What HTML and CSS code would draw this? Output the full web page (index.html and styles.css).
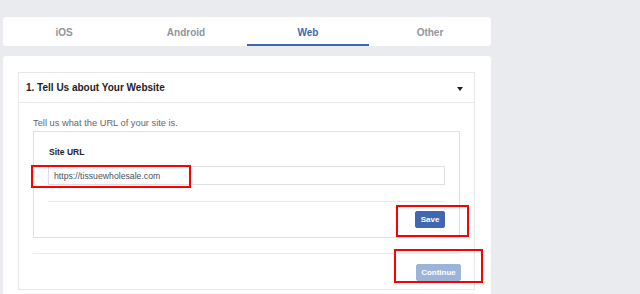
FILE: index.html
```html
<!DOCTYPE html>
<html lang="en">
<head>
    <meta charset="UTF-8">
    <meta name="viewport" content="width=device-width, initial-scale=1.0">
    <title>Quickstart - Web</title>
    <link rel="stylesheet" href="styles.css">
</head>
<body>
    <div class="page">
        <div class="tabs">
            <div class="tab">iOS</div>
            <div class="tab">Android</div>
            <div class="tab active">Web</div>
            <div class="tab">Other</div>
        </div>

        <div class="card">
            <div class="section">
                <div class="section-header">
                    <span>1. Tell Us about Your Website</span>
                    <span class="caret"></span>
                </div>
                <div class="section-body">
                    <p class="hint">Tell us what the URL of your site is.</p>
                    <div class="form-box">
                        <label class="field-label" for="siteUrl">Site URL</label>
                        <input type="text" id="siteUrl" class="field-input" value="https://tissuewholesale.com">
                        <div class="form-footer">
                            <button class="btn">Save</button>
                        </div>
                    </div>
                    <div class="section-footer">
                        <button class="btn disabled">Continue</button>
                    </div>
                </div>
            </div>
        </div>

        <!-- annotations -->
        <div class="mark mark-url"></div>
        <div class="mark mark-save"></div>
        <div class="mark mark-continue"></div>
    </div>
</body>
</html>
```

FILE: styles.css
```css
body {
    margin: 0;
    background-color: #e9ebee;
    font-family: "Liberation Sans", Arial, sans-serif;
    color: #1d2129;
}
.page {
    position: relative;
    padding: 17px 0 0 3px;
    width: 488px;
    height: 277px;
    overflow: hidden;
}
.tabs {
    display: flex;
    background-color: #fff;
    border-radius: 3px;
    height: 29px;
}
.tab {
    flex: 1;
    display: flex;
    align-items: center;
    justify-content: center;
    font-size: 10px;
    font-weight: bold;
    color: #90949c;
    box-sizing: border-box;
    padding-top: 1px;
}
.tab.active {
    color: #4267b2;
    border-bottom: 2px solid #4267b2;
    padding-top: 3px;
}
.card {
    margin-top: 10px;
    background-color: #fff;
    padding: 16px 16px 20px 15px;
    border-radius: 3px 3px 0 0;
}
.section {
    border: 1px solid #e5e6e9;
}
.section-header {
    display: flex;
    align-items: center;
    justify-content: space-between;
    height: 29px;
    padding: 0 11px 0 7px;
    font-size: 10px;
    font-weight: bold;
    border-bottom: 1px solid #e9eaed;
}
.caret {
    width: 0;
    height: 0;
    border-left: 3px solid transparent;
    border-right: 3px solid transparent;
    border-top: 4px solid #1d2129;
    margin-top: 2px;
}
.section-body {
    padding: 12px 14px 8px 14px;
}
.hint {
    margin: 0;
    font-size: 9.3px;
    line-height: 16px;
    color: #606770;
}
.form-box {
    border: 1px solid #dddfe2;
    padding: 13px 14px 9px 14px;
    display: flex;
    flex-direction: column;
}
.field-label {
    font-size: 8.5px;
    font-weight: bold;
    line-height: 14px;
    margin-bottom: 7px;
    padding-left: 1px;
}
.field-input {
    height: 19px;
    box-sizing: border-box;
    border: 1px solid #dddfe2;
    padding: 0 5px;
    font-family: "Liberation Sans", Arial, sans-serif;
    font-size: 8.7px;
    color: #4b4f56;
    margin: 0;
}
.form-footer {
    margin-top: 16px;
    border-top: 1px solid #e9eaed;
    padding-top: 9px;
    display: flex;
    justify-content: flex-end;
}
.section-footer {
    margin-top: 15px;
    border-top: 1px solid #e9eaed;
    padding-top: 10px;
    display: flex;
    justify-content: flex-end;
    margin-right: -1px;
}
.btn {
    font-family: "Liberation Sans", Arial, sans-serif;
    font-size: 8px;
    font-weight: bold;
    color: #fff;
    background-color: #4267b2;
    border: 1px solid #4267b2;
    border-radius: 2px;
    height: 17px;
    width: 30px;
    padding: 0;
    line-height: 15px;
    cursor: pointer;
}
.btn.disabled {
    background-color: #9cb4d8;
    border-color: #9cb4d8;
    width: 45px;
}
.mark {
    position: absolute;
    border: 2px solid #f00;
    box-sizing: border-box;
}
.mark-url {
    left: 31px;
    top: 165px;
    width: 160px;
    height: 23px;
}
.mark-save {
    left: 396px;
    top: 205px;
    width: 73px;
    height: 32px;
}
.mark-continue {
    left: 394px;
    top: 249px;
    width: 89px;
    height: 34px;
}
```
